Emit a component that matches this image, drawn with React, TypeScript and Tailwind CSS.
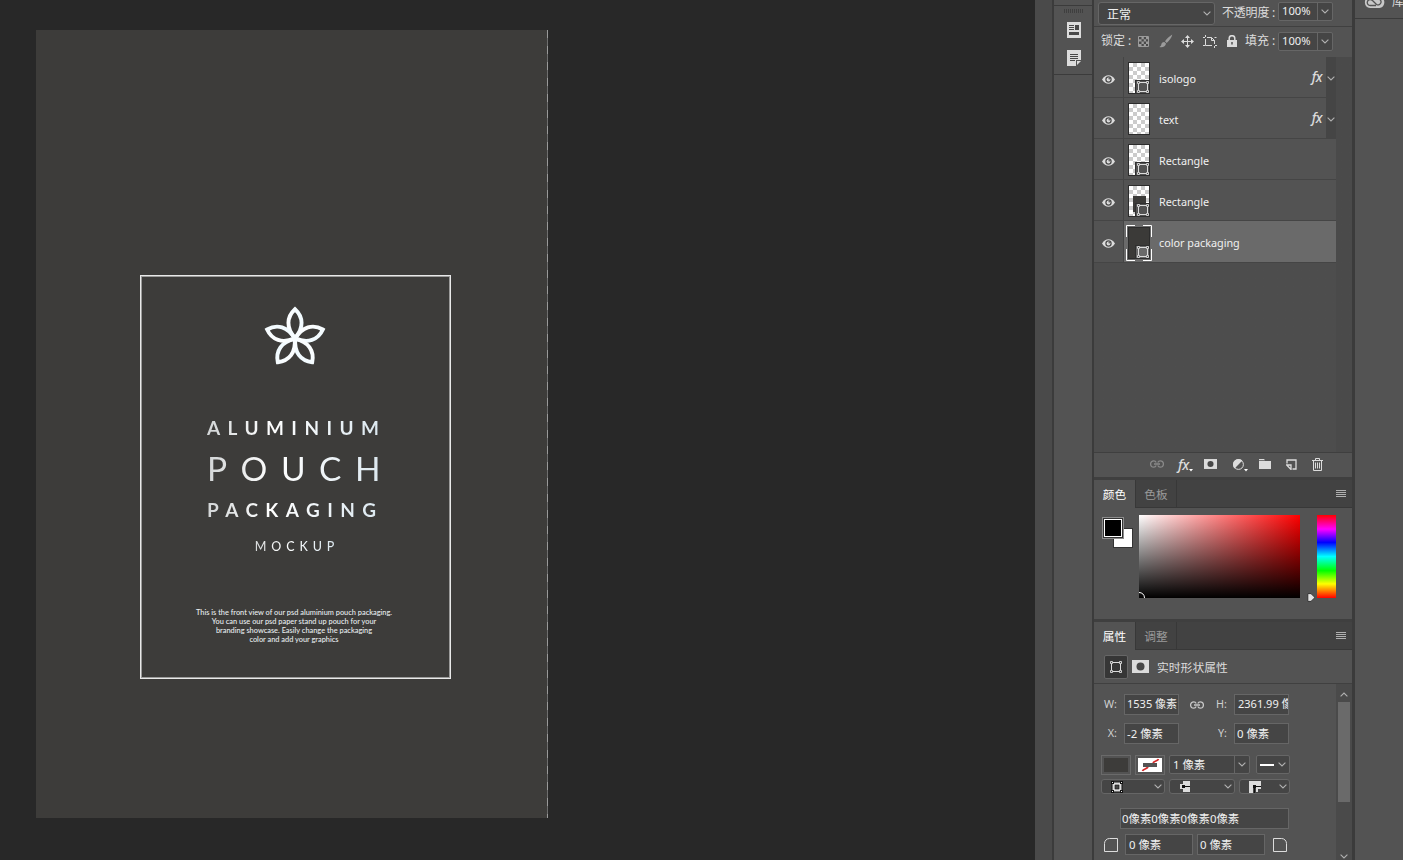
import type { ReactNode } from "react"

const layers = [
  { id: 1, name: "isologo", fx: true, shape: true, fill: "" },
  { id: 2, name: "text", fx: true, shape: false, fill: "" },
  { id: 3, name: "Rectangle", fx: false, shape: true, fill: "" },
  { id: 4, name: "Rectangle", fx: false, shape: true, fill: "part" },
  { id: 5, name: "color packaging", fx: false, shape: true, fill: "full", selected: true },
]

function Chevron({ className = "" }: { className?: string }) {
  return (
    <svg className={`shrink-0 ${className}`} width="8" height="5" viewBox="0 0 8 5" fill="none" stroke="#b0b0b0" strokeWidth="1.1">
      <path d="M.6.6 4 4 7.4.6" />
    </svg>
  )
}

function Eye() {
  return (
    <svg width="13" height="9" viewBox="0 0 13 9">
      <path d="M0 4.5C2 1.4 4 .3 6.5.3S11 1.4 13 4.5C11 7.6 9 8.7 6.5 8.7S2 7.6 0 4.5Z" fill="#dcdcdc" />
      <circle cx="6.5" cy="4.5" r="3.2" fill="#4a4a4a" />
      <circle cx="6.5" cy="4.5" r="1.9" fill="#dcdcdc" />
      <circle cx="7.2" cy="3.8" r=".8" fill="#4a4a4a" />
    </svg>
  )
}

function ShapeIcon({ size = 12 }: { size?: number }) {
  return (
    <svg width={size} height={size} viewBox="0 0 12 12" fill="none" stroke="#dcdcdc">
      <path d="M3 1.5h6M3 10.5h6M1.5 3v6M10.500 3v6" />
      <path d="M.5.5h2v2h-2zM9.500.5h2v2h-2zM.5 9.500h2v2h-2zM9.500 9.500h2v2h-2z" fill="#484848" strokeWidth=".9" />
    </svg>
  )
}

function LinkIcon({ color }: { color: string }) {
  return (
    <svg width="14" height="8" viewBox="0 0 14 8" fill="none" stroke={color} strokeWidth="1.3">
      <path d="M6.2 2.5C5.7 1.4 4.9.8 3.8.8a3.2 3.2 0 0 0 0 6.4c1.1 0 1.9-.6 2.4-1.7M7.8 2.5C8.3 1.4 9.1.8 10.2.8a3.2 3.2 0 0 1 0 6.4c-1.1 0-1.9-.6-2.4-1.7M4 4h6" />
    </svg>
  )
}

function Fx({ className = "" }: { className?: string }) {
  return <span className={`font-['Noto_Sans'] italic font-medium text-[#dcdcdc] tracking-[-0.5px] ${className}`}>fx</span>
}

function MaskIcon({ className = "" }: { className?: string }) {
  return (
    <svg className={className} viewBox="0 0 17 13">
      <path d="M0 0h17v13H0z" fill="#dcdcdc" />
      <circle cx="8.5" cy="6.5" r="4" fill="#484848" />
    </svg>
  )
}

function Box({ className = "", children }: { className?: string; children?: ReactNode }) {
  return (
    <div className={`flex shrink-0 items-center overflow-hidden whitespace-nowrap border border-[#666] bg-[#454545] text-[#f0f0f0] ${className}`}>
      {children}
    </div>
  )
}

function Percent() {
  return (
    <Box className="h-[19px] w-[55px] rounded-[2px]">
      <span className="w-[38px] pl-[3px] text-[11.2px]">100%</span>
      <div className="flex h-full flex-1 items-center justify-center border-l border-[#666]">
        <Chevron />
      </div>
    </Box>
  )
}

function Flower() {
  return (
    <svg className="-ml-[2px]" width="62" height="60" viewBox="0 0 62 60" fill="none" stroke="url(#silver)" strokeWidth="3.900">
      <defs>
        <linearGradient id="silver" gradientUnits="userSpaceOnUse" x1="0" y1="30" x2="62" y2="30">
          <stop offset="0" stopColor="#d5d8da" />
          <stop offset=".3" stopColor="#ffffff" />
          <stop offset=".6" stopColor="#f2fbff" />
          <stop offset="1" stopColor="#dceaf2" />
        </linearGradient>
      </defs>
      {[0, 72, 144, 216, 288].map((angle) => (
        <path key={angle} transform={`rotate(${angle} 31 32.5)`} d="M31 32C22 22 22.500 11 31 3.200C39.500 11 40 22 31 32Z" />
      ))}
    </svg>
  )
}

const silverText = "bg-linear-to-r from-[#d2d5d6] via-white via-35% to-[#d9e6ee] bg-clip-text text-transparent"

function Artboard() {
  return (
    <div className="ml-9 mt-[30px] flex h-[788px] w-[512px] flex-col bg-[linear-gradient(#9a9a9a_50%,#6f6f6f_0)] bg-[length:1px_16px] bg-right-top bg-repeat-y font-[Lato,sans-serif]">
      <div className="mr-px h-full bg-[#3d3c3a] pl-[104px] pt-[245px]">
        <div className="flex h-[404px] w-[311px] flex-col items-center border border-[#e9e9e9] pt-[30px] shadow-[inset_0_0_0_1px_#9b9b9a]">
          <Flower />
          <div className="-ml-[5px] flex w-[172px] flex-col whitespace-nowrap">
            <div className={`mt-[50px] h-[24px] w-[182px] text-[19px] font-bold leading-[24px] tracking-[7.4px] ${silverText}`}>ALUMINIUM</div>
            <div className={`mt-[8px] h-[40px] w-[188px] text-[33.5px] leading-[40px] tracking-[13.5px] ${silverText}`}>POUCH</div>
            <div className={`mt-[10px] h-[24px] w-[182px] text-[19px] font-bold leading-[24px] tracking-[7.4px] ${silverText}`}>PACKAGING</div>
          </div>
          <div className={`mt-[17px] h-[16px] pl-[3px] text-[12.5px] font-medium leading-[16px] tracking-[4.9px] ${silverText}`}>MOCKUP</div>
          <p className="-ml-[3px] mt-[53px] whitespace-pre text-center text-[7.4px] font-medium leading-[9px] text-[#e8edf0]">
            {"This is the front view of our psd aluminium pouch packaging.\nYou can use our psd paper stand up pouch for your\nbranding showcase. Easily change the packaging\ncolor and add your graphics"}
          </p>
        </div>
      </div>
    </div>
  )
}

function IconStrip() {
  return (
    <div className="flex w-[42px] shrink-0 flex-col border-x-2 border-[#3b3b3b] bg-[#535353]">
      <div className="h-[5px]" />
      <div className="flex h-[70px] flex-col items-center border-y border-[#3b3b3b] pl-px">
        <div className="mt-[3px] h-[4px] w-[20px] bg-[repeating-linear-gradient(90deg,#3f3f3f_0_1px,#535353_1px_2px)]" />
        <svg className="mt-[9px]" width="14" height="16" viewBox="0 0 14 16">
          <path d="M0 0h14v16H0z" fill="#dcdcdc" />
          <path d="M2 3h5v1H2zM2 5h5v1H2zM2 7h5v1H2zM8 3h4v5H8zM2 10h10v3H2z" fill="#484848" />
        </svg>
        <svg className="mt-[12px]" width="14" height="16" viewBox="0 0 14 16">
          <path d="M0 0h14v10H9v6H0zM10 11h4l-4 4z" fill="#dcdcdc" />
          <path d="M3 4h8v1H3zM3 6h8v1H3zM3 8h8v1H3zM3 10h5v1H3z" fill="#484848" />
        </svg>
      </div>
    </div>
  )
}

function LockIcons() {
  return (
    <div className="flex h-[16px] items-center">
      <svg width="11" height="11" viewBox="0 0 11 11">
        <path d="M.5.5h10v10H.5z" fill="#4a4a4a" stroke="#9b9b9b" />
        <path d="M3.5 1h2.3v2.3H3.5zM8 1h2v2.3H8zM1 3.3h2.5v2.3H1zM5.8 3.3H8v2.3H5.8zM3.5 5.6h2.3v2.3H3.5zM8 5.6h2v2.3H8zM1 7.9h2.5V10H1zM5.8 7.900H8V10H5.800z" fill="#9b9b9b" />
      </svg>
      <svg className="ml-[10px]" width="14" height="14" viewBox="0 0 14 14" fill="#9b9b9b">
        <path d="M13.3.5c-3 1.7-5.3 4-7.3 6.7l1.7 1.7C10.5 6.5 12.5 4 13.3.5ZM5.3 8c-2 0-2.7 1-3 2.600C2 12 1.300 12.700.5 13c3 .9 6.300-.6 6.500-3.400Z" />
      </svg>
      <svg className="ml-[8px]" width="13" height="13" viewBox="0 0 13 13" fill="#dcdcdc">
        <path d="M6.5 0 9 3H7v3h3V4l3 2.5L10 9V7H7v3h2l-2.5 3L4 10h2V7H3v2L0 6.5 3 4v2h3V3H4z" />
      </svg>
      <svg className="ml-[9px]" width="14" height="13" viewBox="0 0 14 13" fill="none" stroke="#dcdcdc">
        <path d="M0 2.5h2M4 2.5h4.500l3 3V9M2.500 0v2M2.500 4v6.500H9M0 10.500h2M11.500 11v2M12 10.500h2M8.500 2.500v3h3M11.500 2.500h2" />
      </svg>
      <svg className="ml-[10px]" width="10" height="12" viewBox="0 0 10 12">
        <path d="M2.200 6V3.500a2.800 2.800 0 0 1 5.600 0V6" fill="none" stroke="#dcdcdc" strokeWidth="1.5" />
        <path d="M0 5h10v7H0z" fill="#dcdcdc" />
        <path d="M4.3 7h1.400v2.500H4.300z" fill="#484848" />
      </svg>
    </div>
  )
}

function Thumb({ layer }: { layer: (typeof layers)[number] }) {
  return (
    <div className="relative mt-[2px] h-[32px] w-[22px] border border-[#2c2c2c] bg-[conic-gradient(#ccc_25%,#fff_0_50%,#ccc_0_75%,#fff_0)] bg-[length:8px_8px]">
      {layer.fill === "part" && <div className="absolute left-[4px] top-[10px] h-[16px] w-[13px] bg-[#3b3a38]" />}
      {layer.fill === "full" && <div className="absolute inset-0 bg-[#3b3a38]" />}
      {layer.selected && (
        <svg className="absolute -left-[3px] -top-[3px]" width="26" height="36" viewBox="0 0 26 36" fill="none" stroke="#fff">
          <path d="M.5 12V.5H9M17 .5h8.5V12M.5 24v11.5H9M17 35.5h8.5V24" />
        </svg>
      )}
      {layer.shape && (
        <div className={`absolute -bottom-px -right-px flex h-[14px] w-[15px] items-end justify-end border border-[#2f2f2f] ${layer.selected ? "bg-[#6a6a6a]" : "bg-[#535353]"}`}>
          <ShapeIcon />
        </div>
      )}
    </div>
  )
}

function LayerRow({ layer }: { layer: (typeof layers)[number] }) {
  return (
    <div className={`flex w-[242px] border-b border-[#454545] bg-[#535353] ${layer.selected ? "h-[42px]" : "h-[41px]"}`}>
      <div className="flex w-[30px] items-center justify-center border-r border-[#454545] pt-[4px]">
        <Eye />
      </div>
      <div className={`flex flex-1 items-center pl-[4px] ${layer.selected ? "bg-[#6a6a6a]" : ""}`}>
        <Thumb layer={layer} />
        <span className="ml-[9px] mt-[4px] text-[10.8px] text-[#f0f0f0]">{layer.name}</span>
        {layer.fx && (
          <>
            <Fx className="ml-auto mr-[4px] mt-px text-[13.5px]" />
            <div className="flex h-[41px] w-[10px] items-center justify-center bg-[#454545] pt-[2px]">
              <Chevron />
            </div>
          </>
        )}
      </div>
    </div>
  )
}

function Caret() {
  return (
    <svg className="mt-[13px]" width="4" height="3" viewBox="0 0 4 3" fill="#fff">
      <path d="M0 0h4L2 2.5z" />
    </svg>
  )
}

function LayersPanel() {
  return (
    <section className="flex h-[477px] flex-col">
      <div className="flex h-[27px] border-b border-[#404040] pl-[4px] pt-[2px]">
        <Box className="h-[23px] w-[117px] justify-between rounded-[3px] pl-[8px] pr-[3px] text-[12px]">
          <span className="mt-[2px]">正常</span>
          <Chevron />
        </Box>
        <span className="ml-[7px] w-[56px] whitespace-nowrap text-[12px] leading-[21px] tracking-[-0.2px]">不透明度 :</span>
        <Percent />
      </div>
      <div className="flex h-[30px] items-center pl-[7px] pb-[2px]">
        <span className="w-[37px] text-[12px]">锁定 :</span>
        <LockIcons />
        <span className="ml-[8px] w-[33px] whitespace-nowrap text-[12px]">填充 :</span>
        <Percent />
      </div>
      <div className="flex-1 bg-linear-to-r from-[#4d4d4d] from-[242px] to-[#4a4a4a] to-[242px]">
        {layers.map((layer) => (
          <LayerRow key={layer.id} layer={layer} />
        ))}
      </div>
      <div className="flex h-[25px] items-center border-t border-[#3f3f3f] pb-[2px] pl-[56px]">
        <LinkIcon color="#8a8a8a" />
        <div className="ml-[14px] flex w-[26px] items-center">
          <Fx className="text-[14px]" />
          <Caret />
        </div>
        <MaskIcon className="h-[10px] w-[13px]" />
        <div className="ml-[16px] flex w-[26px] items-center">
          <svg width="11" height="11" viewBox="0 0 11 11">
            <circle cx="5.5" cy="5.5" r="4.9" fill="none" stroke="#dcdcdc" />
            <path d="M1.6 9.4A5.5 5.5 0 0 1 9.4 1.6z" fill="#dcdcdc" />
          </svg>
          <Caret />
        </div>
        <svg width="12" height="10" viewBox="0 0 12 10" fill="#dcdcdc">
          <path d="M0 0h5l1 1.2H0zM0 2h12v8H0z" />
        </svg>
        <svg className="ml-[15px]" width="11" height="11" viewBox="0 0 11 11" fill="none" stroke="#dcdcdc" strokeWidth="1.3">
          <path d="M1 4.5V1h9v9H6.5M.6 6h4.4v4.5zM5 10.3V6" />
        </svg>
        <svg className="ml-[15px]" width="11" height="13" viewBox="0 0 11 13" fill="none" stroke="#dcdcdc">
          <path d="M0 2.5h11M3.5 2V.5h4V2M1.5 3v9.5h8V3M3.5 4.5v6M5.5 4.5v6M7.5 4.5v6" />
        </svg>
      </div>
    </section>
  )
}

function Tabs({ first, second }: { first: string; second: string }) {
  return (
    <div className="flex h-[28px] bg-[#424242] text-[11.7px]">
      <div className="flex w-[42px] items-center justify-center border-r border-[#383838] bg-[#535353] pt-[2px] text-white">{first}</div>
      <div className="flex w-[41px] items-center justify-center border-b border-r border-[#383838] pt-[2px] text-[#9a9a9a]">{second}</div>
      <div className="flex flex-1 items-center justify-end border-b border-[#383838] pr-[6px]">
        <svg width="10" height="8" viewBox="0 0 10 8" fill="#b0b0b0">
          <path d="M0 0h10v1H0zM0 2h10v1H0zM0 4h10v1H0zM0 6h10v1H0z" />
        </svg>
      </div>
    </div>
  )
}

function ColorPanel() {
  return (
    <section className="flex h-[142px] flex-col border-t-[3px] border-[#3f3f3f]">
      <Tabs first="颜色" second="色板" />
      <div className="flex h-[111px] pt-[7px]">
        <div className="relative ml-[8px] mt-[2px] h-[32px] w-[32px]">
          <div className="absolute left-[11px] top-[11px] h-[20px] w-[20px] border border-[#333] bg-white" />
          <div className="absolute left-0 top-0 flex h-[22px] w-[22px] items-center justify-center border border-[#8c8c8c] bg-[#333]">
            <div className="h-[18px] w-[18px] border border-white bg-black" />
          </div>
        </div>
        <div className="ml-[5px] h-[83px] w-[161px] bg-[linear-gradient(to_top,#000,transparent),linear-gradient(to_right,#fff,#f00)]">
          <svg className="mt-[77px]" width="6" height="6" viewBox="0 0 6 6" fill="none" stroke="#fff">
            <path d="M0 .5c3 0 5.500 2 5.500 5.500" />
          </svg>
        </div>
        <svg className="ml-[7px] mr-px mt-[78px]" width="9" height="9" viewBox="0 0 9 9" fill="#e4e4e4" stroke="#333">
          <path d="M.8.6h3.2l4 3.9-4 3.9H.8z" />
        </svg>
        <div className="h-[83px] w-[19px] bg-[linear-gradient(#f00,#f0f_17%,#00f_33%,#0ff_50%,#0f0_67%,#ff0_83%,#f00)]" />
      </div>
    </section>
  )
}

function RowLabel({ className = "", children }: { className?: string; children: string }) {
  return <span className={`shrink-0 pr-[7px] text-right text-[10.8px] text-[#d0d0d0] ${className}`}>{children}</span>
}

function PropertiesPanel() {
  return (
    <section className="flex flex-1 flex-col border-t-[3px] border-[#3f3f3f]">
      <Tabs first="属性" second="调整" />
      <div className="flex h-[34px] items-center border-b border-[#404040] pl-[10px] text-[11.8px]">
        <div className="flex h-[24px] w-[24px] items-center justify-center rounded-[2px] border border-[#666] bg-[#363636]">
          <ShapeIcon />
        </div>
        <MaskIcon className="ml-[4px] h-[13px] w-[17px]" />
        <span className="ml-[8px] mt-[2px] text-[#dcdcdc]">实时形状属性</span>
      </div>
      <div className="flex flex-1">
        <div className="flex w-[242px] flex-col text-[11.4px]">
          <div className="mt-[10px] flex h-[21px] items-center">
            <RowLabel className="w-[30px]">W:</RowLabel>
            <Box className="h-[21px] w-[55px] pl-[2px] text-[11px]">1535 像素</Box>
            <div className="flex w-[36px] justify-center">
              <LinkIcon color="#c8c8c8" />
            </div>
            <RowLabel className="w-[19px]">H:</RowLabel>
            <Box className="h-[21px] w-[55px] pl-[3px] text-[11px]">2361.99 像素</Box>
          </div>
          <div className="mt-[8px] flex h-[21px] items-center">
            <RowLabel className="w-[30px]">X:</RowLabel>
            <Box className="h-[21px] w-[55px] pl-[2px]">-2 像素</Box>
            <RowLabel className="w-[55px]">Y:</RowLabel>
            <Box className="h-[21px] w-[55px] pl-[2px]">0 像素</Box>
          </div>
          <div className="mt-[11px] flex h-[20px] pl-[7px]">
            <div className="h-[20px] w-[30px] border border-[#6a6a6a] p-[2px]">
              <div className="h-full bg-[#3d3c3a]" />
            </div>
            <div className="ml-[4px] h-[20px] w-[30px] border border-[#6a6a6a] p-[2px]">
              <svg width="24" height="14" viewBox="0 0 24 14">
                <path d="M0 0h24v14H0z" fill="#fff" />
                <path d="M4.500 13c1-2.500 4-1.500 5.500-4M20.500 1c-1 2.500-4 1.500-5.500 4" stroke="#d52b2b" strokeWidth="1.8" fill="none" />
                <path d="M5 5h14v4H5z" fill="#535353" />
              </svg>
            </div>
            <Box className="ml-[4px] h-[19px] w-[81px] rounded-[2px] pl-[3px]">
              <span className="mt-px flex-1">1 像素</span>
              <div className="flex h-full w-[15px] items-center justify-center border-l border-[#666]">
                <Chevron />
              </div>
            </Box>
            <Box className="ml-[6px] h-[19px] w-[34px] justify-between rounded-[2px] px-[3px]">
              <div className="h-[2px] w-[14px] bg-white" />
              <Chevron />
            </Box>
          </div>
          <div className="mt-[4px] flex h-[15px] pl-[7px]">
            <Box className="h-[15px] w-[64px] justify-between rounded-[3px] pl-[9px] pr-[2px]">
              <svg width="12" height="12" viewBox="0 0 12 12">
                <path d="M1 1h10v10H1z" fill="#dcdcdc" stroke="#111" />
                <path d="M4 4h4v4H4z" fill="#454545" stroke="#111" strokeWidth=".6" />
                <path d="M0 0h3v3H0zM9 0h3v3H9zM0 9h3v3H0zM9 9h3v3H9z" fill="#111" />
                <path d="M1 1h1v1H1zM10 1h1v1h-1zM1 10h1v1H1zM10 10h1v1h-1z" fill="#eee" />
              </svg>
              <Chevron />
            </Box>
            <Box className="ml-[4px] h-[15px] w-[66px] justify-between rounded-[3px] pl-[10px] pr-[2px]">
              <svg width="10" height="11" viewBox="0 0 10 11">
                <path d="M3 0h7v11H3V8H0V3h3z" fill="#dcdcdc" />
                <path d="M2 4h3v1h5v1H5v1H2z" fill="#111" />
              </svg>
              <Chevron />
            </Box>
            <Box className="ml-[4px] h-[15px] w-[51px] justify-between rounded-[3px] pl-[9px] pr-[2px]">
              <svg width="12" height="12" viewBox="0 0 12 12">
                <path d="M0 0h12v8H9v3H7V7H4v5H0z" fill="#dcdcdc" />
                <path d="M4 4h3v1h5v1H7v1H6v5H5V7H4z" fill="#111" />
              </svg>
              <Chevron />
            </Box>
          </div>
          <Box className="ml-[26px] mt-[14px] h-[21px] w-[169px] pl-px">0像素0像素0像素0像素</Box>
          <div className="mt-[5px] flex h-[21px] items-center pl-[10px]">
            <svg width="14" height="14" viewBox="0 0 14 14" fill="none" stroke="#dcdcdc">
              <path d="M.5 13.5V5.5a5 5 0 0 1 5-5h8v13z" />
            </svg>
            <Box className="ml-[7px] h-[21px] w-[68px] pl-[3px]">0 像素</Box>
            <Box className="ml-[4px] h-[21px] w-[68px] pl-[2px]">0 像素</Box>
            <svg className="ml-[8px]" width="14" height="14" viewBox="0 0 14 14" fill="none" stroke="#dcdcdc">
              <path d="M.5 13.5V.5h8a5 5 0 0 1 5 5v8z" />
            </svg>
          </div>
        </div>
        <div className="flex flex-1 flex-col items-center bg-[#4a4a4a] pt-[8px]">
          <Chevron className="rotate-180" />
          <div className="mt-[5px] h-[100px] w-[12px] bg-[#6a6a6a]" />
          <Chevron className="mt-[52px]" />
        </div>
      </div>
    </section>
  )
}

export default function App() {
  return (
    <div className="flex h-[860px] w-[1403px] overflow-hidden bg-[#282828] font-['Noto_Sans','Noto_Sans_CJK_SC',sans-serif] text-[#dcdcdc]">
      <main className="w-[1035px] shrink-0">
        <Artboard />
      </main>
      <div className="w-[17px] shrink-0 bg-[#4a4a4a]" />
      <IconStrip />
      <div className="flex h-[860px] w-[258px] shrink-0 flex-col bg-[#535353]">
        <LayersPanel />
        <ColorPanel />
        <PropertiesPanel />
      </div>
      <aside className="flex-1 border-l-[3px] border-[#3b3b3b] bg-[#535353]">
        <div className="flex h-[19px] overflow-hidden border-b border-[#3b3b3b] pl-[9px]">
          <svg className="-mt-[9px] shrink-0" width="21" height="18" viewBox="0 0 21 18" fill="none">
            <path d="M6 17a5.5 5.5 0 0 1-1-10.8A7 7 0 0 1 17 6.500 5.500 5.500 0 0 1 15.500 17z" fill="#c8c8c8" />
            <path d="M12 14.500H6.500a3 3 0 1 1 2-5l4 4a3 3 0 1 0 1-5.500" stroke="#535353" strokeWidth="1.3" />
          </svg>
          <span className="-mt-[7px] ml-[7px] whitespace-nowrap text-[12px]">库</span>
        </div>
      </aside>
    </div>
  )
}
